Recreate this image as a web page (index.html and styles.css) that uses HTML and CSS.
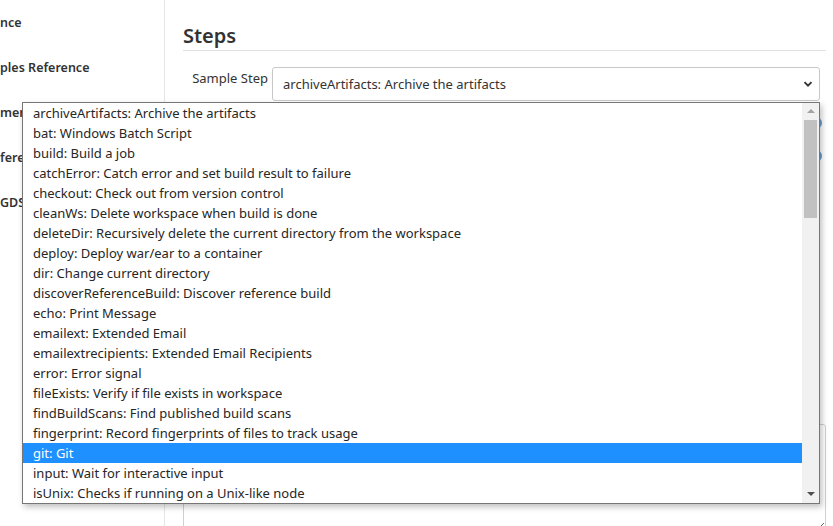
FILE: index.html
```html
<!DOCTYPE html>
<html lang="en">
  <head>
    <meta charset="UTF-8" />
    <title>Pipeline Syntax</title>
    <link rel="stylesheet" href="styles.css">
  </head>
  <body>
    <div class="page">
      <div class="sidebar">
        <a class="task" href="javascript:;">nce</a>
        <a class="task" href="javascript:;">ples Reference</a>
        <a class="task" href="javascript:;">men</a>
        <a class="task" href="javascript:;">fere</a>
        <a class="task" href="javascript:;">GDSL</a>
      </div>

      <div class="content">
        <h2 class="section-title">Steps</h2>

        <div class="form-row">
          <label class="form-label">Sample Step</label>
          <div class="select">
            <span>archiveArtifacts: Archive the artifacts</span>
            <svg class="chevron" width="10" height="8" viewBox="0 0 10 8">
              <path d="M1.5 2.2 L5 5.7 L8.5 2.2" fill="none" stroke="#333" stroke-width="1.9" />
            </svg>
          </div>
          <div class="help-col"></div>
        </div>

        <div class="hidden-fields">
          <div class="field-row"><span class="help-icon"></span></div>
          <div class="field-row"><span class="help-icon"></span></div>
        </div>

        <textarea class="snippet"></textarea>
      </div>
    </div>

    <div class="dropdown">
      <ul class="options">
        <li>archiveArtifacts: Archive the artifacts</li>
        <li>bat: Windows Batch Script</li>
        <li>build: Build a job</li>
        <li>catchError: Catch error and set build result to failure</li>
        <li>checkout: Check out from version control</li>
        <li>cleanWs: Delete workspace when build is done</li>
        <li>deleteDir: Recursively delete the current directory from the workspace</li>
        <li>deploy: Deploy war/ear to a container</li>
        <li>dir: Change current directory</li>
        <li>discoverReferenceBuild: Discover reference build</li>
        <li>echo: Print Message</li>
        <li>emailext: Extended Email</li>
        <li>emailextrecipients: Extended Email Recipients</li>
        <li>error: Error signal</li>
        <li>fileExists: Verify if file exists in workspace</li>
        <li>findBuildScans: Find published build scans</li>
        <li>fingerprint: Record fingerprints of files to track usage</li>
        <li class="selected">git: Git</li>
        <li>input: Wait for interactive input</li>
        <li>isUnix: Checks if running on a Unix-like node</li>
      </ul>
      <div class="scrollbar">
        <span class="arrow arrow-up"></span>
        <span class="thumb"></span>
        <span class="arrow arrow-down"></span>
      </div>
    </div>
  </body>
</html>
```

FILE: styles.css
```css
* {
  margin: 0;
  padding: 0;
  box-sizing: border-box;
}
body {
  font-family: "Noto Sans", "Open Sans", sans-serif;
  font-size: 13px;
  color: #333;
  background-color: #fff;
  width: 833px;
  height: 526px;
  overflow: hidden;
}
.page {
  display: flex;
  height: 526px;
}
.sidebar {
  width: 165px;
  flex-shrink: 0;
  border-right: 1px solid #e4e6e8;
  overflow: hidden;
  display: flex;
  flex-direction: column;
}
.task {
  display: block;
  height: 45px;
  line-height: 45px;
  font-size: 12.5px;
  font-weight: 600;
  color: #333;
  text-decoration: none;
  white-space: nowrap;
}
.content {
  flex: 1;
  padding: 24px 7px 0 18px;
  display: flex;
  flex-direction: column;
}
.section-title {
  font-size: 20px;
  font-weight: 600;
  line-height: 24px;
  padding-bottom: 2px;
  border-bottom: 1px solid #dfe1e3;
  color: #333;
}
.form-row {
  display: flex;
  margin-top: 16px;
}
.form-label {
  width: 85px;
  text-align: right;
  padding-top: 1px;
  line-height: 20px;
  white-space: nowrap;
  margin-right: 4px;
}
.select {
  flex: 1;
  height: 34px;
  border: 1px solid #c9c9c9;
  border-radius: 3px;
  display: flex;
  align-items: center;
  justify-content: space-between;
  padding: 0 6px 0 10px;
  color: #333;
}
.help-col {
  width: 6px;
}
.hidden-fields {
  display: flex;
  flex-direction: column;
  padding-top: 5px;
}
.field-row {
  height: 33px;
  display: flex;
  justify-content: flex-end;
  align-items: center;
}
.help-icon {
  width: 12px;
  height: 12px;
  border-radius: 50%;
  background-color: #6a9fcc;
  margin-right: 4px;
}
.snippet {
  flex-shrink: 0;
  margin-top: 252px;
  height: 108px;
  width: 643px;
  border: 1px solid #d0d0d0;
  border-radius: 3px;
  resize: vertical;
}
.dropdown {
  position: absolute;
  left: 22px;
  top: 102px;
  width: 798px;
  height: 402px;
  border: 1px solid #767676;
  background-color: #fff;
  box-shadow: 2px 3px 6px rgba(0, 0, 0, 0.25);
  display: flex;
  overflow: hidden;
}
.options {
  flex: 1;
  list-style: none;
}
.options li {
  height: 20px;
  line-height: 20px;
  padding-left: 10px;
  color: #262626;
  white-space: nowrap;
}
.options li.selected {
  background-color: #1e90ff;
  color: #fff;
}
.scrollbar {
  width: 17px;
  background-color: #f1f1f1;
  display: flex;
  flex-direction: column;
  align-items: center;
  padding: 6px 0 6px 0;
}
.arrow {
  width: 0;
  height: 0;
  border-left: 4px solid transparent;
  border-right: 4px solid transparent;
}
.arrow-up {
  border-bottom: 4px solid #a3a3a3;
}
.arrow-down {
  border-top: 4px solid #505050;
  margin-top: auto;
  margin-bottom: 1px;
}
.thumb {
  width: 13px;
  height: 98px;
  margin-top: 7px;
  background-color: #c1c1c1;
}
```
